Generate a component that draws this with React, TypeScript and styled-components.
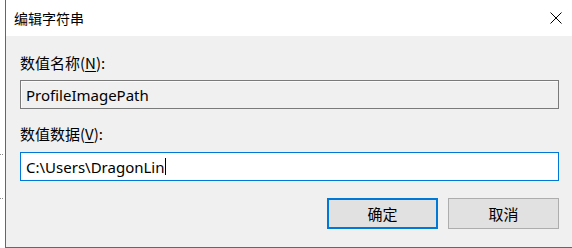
import styled, { createGlobalStyle } from "styled-components";

const GlobalStyle = createGlobalStyle`
  html, body {
    margin: 0;
    padding: 0;
    background: #ffffff;
    overflow: hidden;
  }
  body {
    font-family: "Segoe UI", "Noto Sans", "Noto Sans CJK SC", sans-serif;
  }
`;

const Screen = styled.div`
  display: flex;
  width: 572px;
  height: 248px;
  overflow: hidden;
`;

const BackStrip = styled.div`
  width: 5px;
  flex: none;
  background: #ffffff;
  display: flex;
  flex-direction: column;
  padding-top: 154px;
  gap: 43px;
`;

const Dots = styled.div`
  width: 4px;
  height: 1px;
  background: repeating-linear-gradient(90deg, #8a8a8a 0 1px, transparent 1px 2px);
`;

const Window = styled.div`
  flex: none;
  width: 569px;
  height: 247px;
  border-left: 1px solid #1979ca;
  border-bottom: 1px solid #1979ca;
  display: flex;
  flex-direction: column;
  background: #f0f0f0;
`;

const TitleBar = styled.div`
  height: 36px;
  flex: none;
  background: #ffffff;
  display: flex;
  align-items: center;
  justify-content: space-between;
  padding: 0 13px 0 8px;
`;

const Title = styled.span`
  font-family: "Noto Sans CJK SC", sans-serif;
  font-size: 14px;
  color: #000000;
  line-height: 20px;
`;

const CloseButton = styled.div`
  width: 12px;
  height: 12px;
  display: flex;
`;

const Body = styled.div`
  display: flex;
  flex-direction: column;
  padding: 17px 0 0 14px;
`;

const Label = styled.div<{ $gap: number }>`
  font-family: "Noto Sans CJK SC", sans-serif;
  font-size: 15px;
  line-height: 20px;
  color: #000000;
  margin-top: ${(p) => p.$gap}px;
`;

const Key = styled.span`
  text-decoration: underline;
  text-underline-offset: 2px;
`;

const Field = styled.div<{ $active?: boolean }>`
  box-sizing: border-box;
  width: 539px;
  height: 29px;
  margin-top: ${(p) => (p.$active ? 8 : 7)}px;
  border: 1px solid ${(p) => (p.$active ? "#0078d7" : "#7a7a7a")};
  background: ${(p) => (p.$active ? "#ffffff" : "#f0f0f0")};
  box-shadow: ${(p) => (p.$active ? "none" : "inset 1px 1px 0 #fbfbfb")};
  display: flex;
  align-items: center;
  padding-left: 5px;
  font-family: "Segoe UI", "Noto Sans", sans-serif;
  font-size: 15px;
  color: #000000;
`;

const Caret = styled.span`
  display: inline-block;
  width: 1px;
  height: 17px;
  background: #000000;
  margin-left: 1px;
`;

const ButtonRow = styled.div`
  display: flex;
  justify-content: flex-end;
  gap: 10px;
  width: 539px;
  margin-top: 17px;
`;

const Button = styled.div<{ $default?: boolean }>`
  box-sizing: border-box;
  width: 111px;
  height: 31px;
  background: #e1e1e1;
  border: ${(p) => (p.$default ? "2px solid #0078d7" : "1px solid #adadad")};
  display: flex;
  align-items: center;
  justify-content: center;
  font-family: "Noto Sans CJK SC", sans-serif;
  font-size: 15px;
  color: #000000;
`;

export default function App() {
  return (
    <>
      <GlobalStyle />
      <Screen>
        <BackStrip>
          <Dots />
          <Dots />
        </BackStrip>
        <Window>
          <TitleBar>
            <Title>编辑字符串</Title>
            <CloseButton>
              <svg width="12" height="12" viewBox="0 0 12 12">
                <path d="M0.5 0.5 L11.5 11.5 M11.5 0.5 L0.5 11.5" stroke="#000" strokeWidth="1" fill="none" />
              </svg>
            </CloseButton>
          </TitleBar>
          <Body>
            <Label $gap={0}>
              数值名称(<Key>N</Key>):
            </Label>
            <Field>ProfileImagePath</Field>
            <Label $gap={15}>
              数值数据(<Key>V</Key>):
            </Label>
            <Field $active>
              C:\Users\DragonLin
              <Caret />
            </Field>
            <ButtonRow>
              <Button $default>确定</Button>
              <Button>取消</Button>
            </ButtonRow>
          </Body>
        </Window>
      </Screen>
    </>
  );
}
